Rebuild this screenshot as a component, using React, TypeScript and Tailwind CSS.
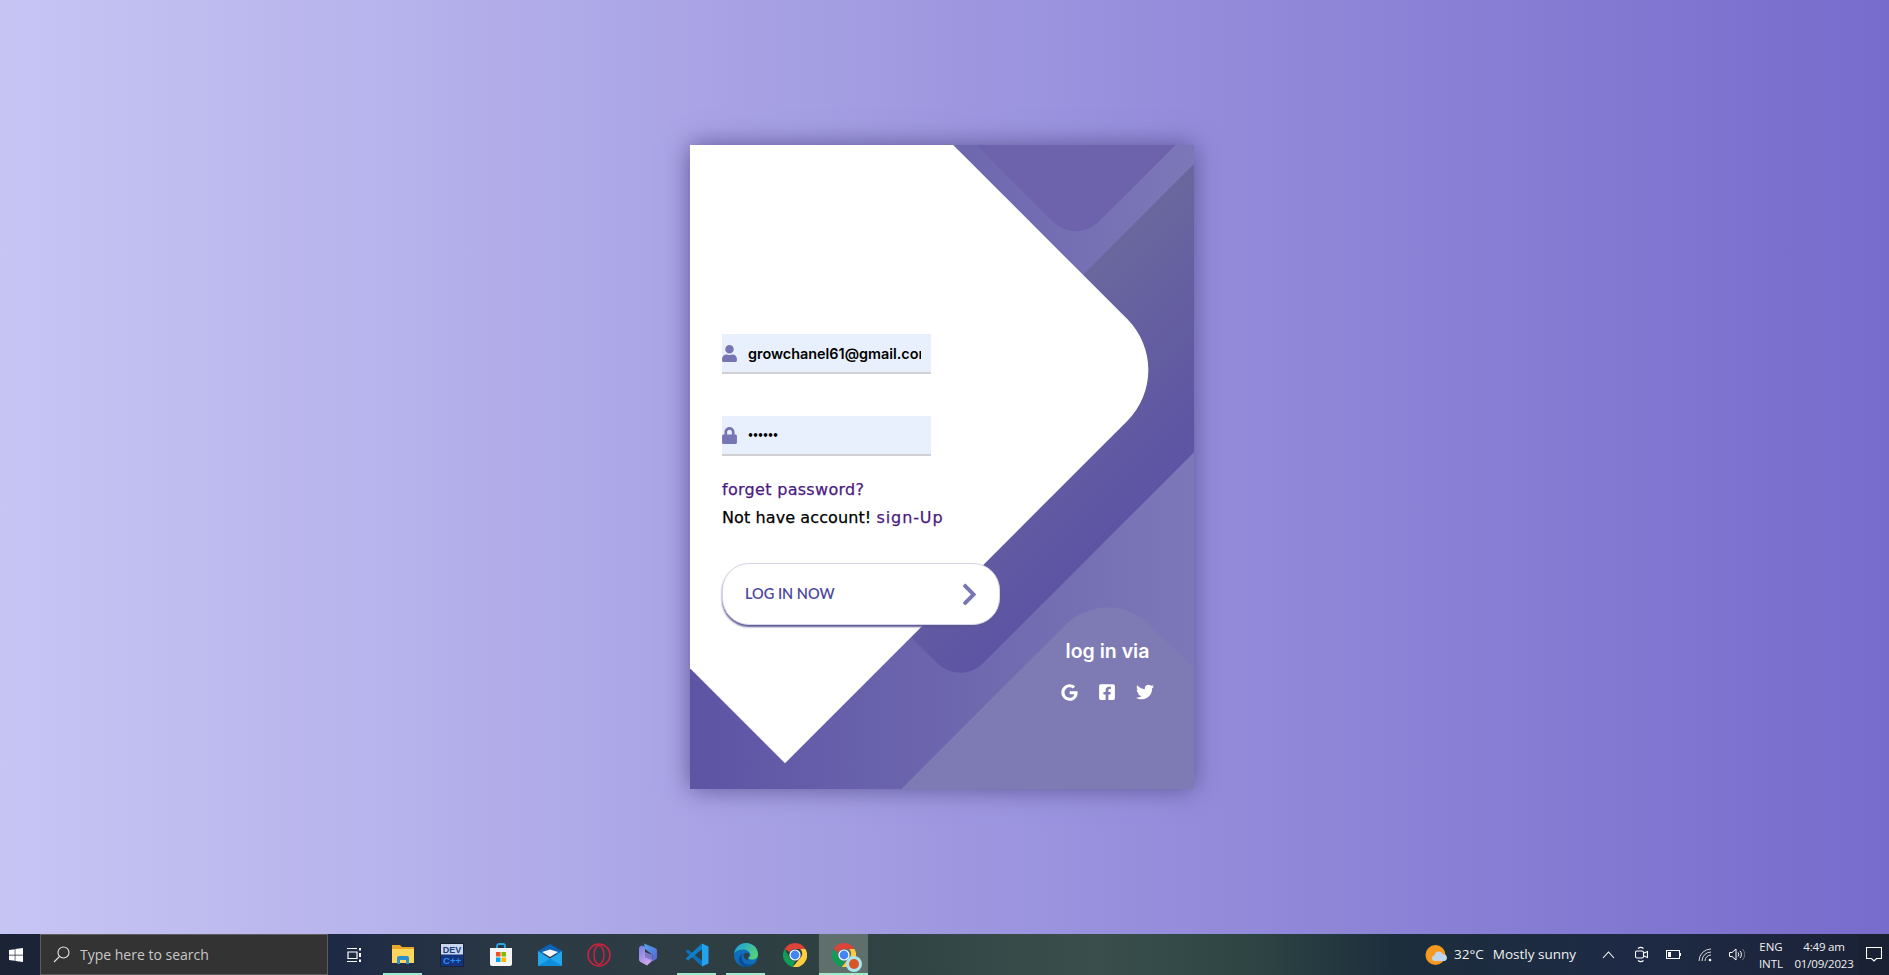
import React from "react";
import { FaUser, FaLock, FaChevronRight, FaGoogle, FaFacebookSquare, FaTwitter, FaWindows } from "react-icons/fa";

function Chrome({ size = 24 }: { size?: number }) {
  return (
    <svg width={size} height={size} viewBox="0 0 24 24">
      <path fill="#DB4437" d="M12 0a12 12 0 0 1 10.39 6H12a6 6 0 0 0-5.2 3L1.6 6A12 12 0 0 1 12 0z" />
      <path fill="#0F9D58" d="M1.6 6l5.2 9a6 6 0 0 0 5.2 3l-2.2 5.9A12 12 0 0 1 1.6 6z" />
      <path fill="#FFCD40" d="M22.39 6A12 12 0 0 1 9.8 23.9L17.2 15a6 6 0 0 0 0-9z" />
      <circle cx="12" cy="12" r="5.6" fill="#fff" />
      <circle cx="12" cy="12" r="4.4" fill="#4285F4" />
    </svg>
  );
}

function Explorer() {
  return (
    <svg width="22" height="19" viewBox="0 0 22 19">
      <path fill="#E8A92A" d="M0 0h8l2 2h12v15H0z" />
      <path fill="#FFD65C" d="M0 4h22v14H0z" />
      <path fill="#2E8FCF" d="M5 19v-6a2 2 0 0 1 2-2h8a2 2 0 0 1 2 2v6h-3v-4H8v4z" />
    </svg>
  );
}

function DevCpp() {
  return (
    <svg width="24" height="24" viewBox="0 0 24 24">
      <rect x="0.5" y="0.5" width="23" height="23" fill="#13357F" stroke="#1A2238" />
      <rect x="1" y="1" width="22" height="10.5" fill="#C9D6EC" />
      <text x="12" y="10" textAnchor="middle" fontSize="9" fontWeight="700" fill="#1B3B7E" fontFamily="Liberation Sans, sans-serif">DEV</text>
      <text x="12" y="21" textAnchor="middle" fontSize="9.5" fontWeight="700" fill="#2A8CF0" fontFamily="Liberation Sans, sans-serif">C++</text>
    </svg>
  );
}

function Store() {
  return (
    <svg width="24" height="24" viewBox="0 0 24 24">
      <path d="M8 5V3a2 2 0 0 1 2-2h4a2 2 0 0 1 2 2v2" fill="none" stroke="#2AA5E6" strokeWidth="1.8" />
      <path fill="#F4F4F4" d="M1 5h22v16a2 2 0 0 1-2 2H3a2 2 0 0 1-2-2z" />
      <rect x="7" y="9" width="4.5" height="4.5" fill="#F25022" />
      <rect x="12.5" y="9" width="4.5" height="4.5" fill="#7FBA00" />
      <rect x="7" y="14.5" width="4.5" height="4.5" fill="#00A4EF" />
      <rect x="12.5" y="14.5" width="4.5" height="4.5" fill="#FFB900" />
    </svg>
  );
}

function Mail() {
  return (
    <svg width="24" height="22" viewBox="0 0 24 22">
      <path fill="#0B63B5" d="M0 7l12-7 12 7v3H0z" />
      <path fill="#F2F4F8" d="M4 8l8-2.500L20 8l-8 5z" />
      <path fill="#22A7EC" d="M0 7l12 7.500L24 7v15H0z" />
      <path fill="#0F8DDB" d="M0 22l12-7.500L24 22z" />
    </svg>
  );
}

function Opera() {
  return (
    <svg width="24" height="24" viewBox="0 0 24 24" fill="none" stroke="#D2203F" strokeWidth="1.5">
      <circle cx="12" cy="12" r="11" />
      <ellipse cx="12" cy="12" rx="5" ry="9.5" />
    </svg>
  );
}

function Bing() {
  return (
    <svg width="20" height="23" viewBox="0 0 20 23">
      <defs>
        <linearGradient id="bingA" x1="0" y1="0" x2="1" y2="1">
          <stop offset="0" stopColor="#4FA8E8" />
          <stop offset="1" stopColor="#5A62D6" />
        </linearGradient>
        <linearGradient id="bingB" x1="0" y1="0" x2="0.6" y2="1">
          <stop offset="0" stopColor="#6F7FE0" />
          <stop offset="1" stopColor="#D7A6F0" />
        </linearGradient>
      </defs>
      <path fill="url(#bingB)" d="M1 5.500a3 3 0 0 1 4.500-2.500L7 4v10l8 3-6 5.500-6.500-3.500A3 3 0 0 1 1 16z" />
      <path fill="url(#bingA)" d="M6 .5l11 4.500a3 3 0 0 1 2 2.800v6.400a3 3 0 0 1-1.500 2.600L14 18.500c1.500-2 1.500-5.500-.5-7.500L7 6z" />
      <path fill="#8E86E6" d="M7 9l6.500 2.500c1.500 1 1.500 5 .5 7L7 14z" opacity="0.8" />
    </svg>
  );
}

function VsCode() {
  return (
    <svg width="24" height="24" viewBox="0 0 24 24">
      <path fill="#0E6FB8" d="M.7 8.500l2.300-2 15 12v4.500L16.500 23z" />
      <path fill="#0E7FCB" d="M.7 15.500l2.300 2 15-12V1L16.500 1z" />
      <path fill="#23A3EE" d="M17 .5L23.500 3.500v17L17 23.500z" />
    </svg>
  );
}

function Edge() {
  return (
    <svg width="24" height="24" viewBox="0 0 24 24">
      <defs>
        <linearGradient id="edgeG" x1="0" y1="0" x2="1" y2="0.6">
          <stop offset="0" stopColor="#1B9DE2" />
          <stop offset="1" stopColor="#52D17C" />
        </linearGradient>
      </defs>
      <circle cx="12" cy="12" r="12" fill="#0F6DBB" />
      <path fill="url(#edgeG)" d="M0.2 10C1.5 4 6.5 0 12 0c7 0 12 5 12 11.5 0 3-2.5 5-5.5 5-2 0-3.5-.5-4.5-1.500 2-1 2.600-2.600 2.200-4C15 8 12.500 6.500 9.500 6.500 5.500 6.500 2 8 .2 10z" />
      <path fill="#0A4E96" d="M9 11c-2 2-1.500 6 1 8.500 2.500 2.500 7 3 10.500 .5-2.500 3-5 4-8.500 4-2.500 0-6-2-7-6-.8-3.500 1.500-6.500 4-7z" />
      <path fill="#2F3F42" d="M9.500 12c.5-1.500 2.500-2.500 4.500-2 1.500.5 1.800 2.500.5 4-1 1-1.500 2.500 0 3.500-2.500-.5-5.500-3-5-5.500z" />
    </svg>
  );
}

function TaskButton({ children, active, highlight }: { children: React.ReactNode; active?: boolean; highlight?: boolean }) {
  return (
    <div className={`relative flex h-full w-[49px] items-center justify-center ${highlight ? "bg-[#5f6f6b]" : ""}`}>
      {children}
      {active && <div className={`absolute bottom-0 h-[2px] bg-[#9FEBCB] ${highlight ? "inset-x-0" : "inset-x-[5px]"}`} />}
    </div>
  );
}

function Field({ icon, type, value, textClass }: { icon: React.ReactNode; type: string; value: string; textClass: string }) {
  return (
    <div className="relative w-[209px]">
      <div className="absolute left-[-1px] top-[11px] text-[#7875B5]">{icon}</div>
      <input
        readOnly
        type={type}
        value={value}
        className={`h-[40px] w-full border-b-2 border-[#D1D1D4] bg-[#E8F0FE] pl-[26px] pr-[10px] font-semibold text-black outline-none ${textClass}`}
      />
    </div>
  );
}

export default function App() {
  return (
    <div className="flex h-[975px] w-[1889px] flex-col overflow-hidden">
      <main className="flex h-[934px] items-center justify-center bg-[linear-gradient(90deg,#C7C5F4,#776BCC)] pr-[5px]">
        <div className="relative h-[644px] w-[504px] bg-[linear-gradient(90deg,#5D54A4,#7C78B8)] shadow-[0_0_24px_#5C5696]">
          <div className="absolute inset-0 overflow-hidden">
            <div className="absolute left-[276px] top-[-166px] h-[220px] w-[220px] rotate-45 rounded-[32px] bg-[#6C63AC]" />
            <div className="absolute left-[294px] top-[-9px] h-[560px] w-[204px] rotate-45 rounded-[32px] bg-[linear-gradient(270deg,#5D54A4,#6A679E)]" />
            <div className="absolute left-[-183px] top-[-53px] h-[556px] w-[556px] rotate-45 rounded-tr-[72px] bg-white" />
            <div className="absolute left-[241px] top-[464px] h-[400px] w-[240px] rotate-45 rounded-[60px] bg-[#7E7BB4]" />
          </div>

          <div className="relative flex h-full flex-col pl-[32px] pt-[189px]">
            <div className="flex flex-col gap-[42px]">
              <Field icon={<FaUser size={17} />} type="text" value="growchanel61@gmail.com" textClass="font-['Inter',sans-serif] text-[14.4px]" />
              <Field icon={<FaLock size={17} />} type="password" value="123456" textClass="font-['Lato',sans-serif] text-[8.6px]" />
            </div>
            <div className="mt-[20px] font-['DejaVu_Sans',sans-serif] text-[16px] leading-[28px] text-black [-webkit-text-stroke:0.25px]">
              <div className="tracking-[0.3px] text-[#4B1A82]">forget password?</div>
              <div className="tracking-[0.1px]">
                Not have account! <span className="tracking-[0.9px] text-[#4B1A82]">sign-Up</span>
              </div>
            </div>
            <button className="mt-[31px] flex h-[62px] w-[278px] items-center justify-between rounded-[27px] border border-[#D4D3E8] bg-white pl-[22px] pr-[17px] font-['Lato',sans-serif] text-[14.5px] font-semibold text-[#4C489D] shadow-[0_2px_2px_#5C5696]">
              <span>LOG IN NOW</span>
              <FaChevronRight size={25} className="text-[#7875B5]" />
            </button>
          </div>

          <div className="absolute right-[40px] top-[493px] flex flex-col items-center text-white">
            <div className="font-['Inter',sans-serif] text-[19.5px] font-semibold leading-[26px]">log in via</div>
            <div className="mt-[19px] flex items-center gap-[20px]">
              <FaGoogle size={17} />
              <FaFacebookSquare size={18} />
              <FaTwitter size={18} />
            </div>
          </div>
        </div>
      </main>

      <footer className="flex h-[41px] items-center bg-[linear-gradient(90deg,#1B2335_0%,#1E2A45_18%,#2C3A44_28%,#2F4142_45%,#3A4F4C_58%,#2E4544_66%,#1C2E3C_74%,#1E2A45_86%,#1B2236_100%)] font-['Open_Sans',sans-serif] text-white">
        <div className="flex h-full w-[40px] items-center pl-[8px]">
          <FaWindows size={16} />
        </div>
        <div className="flex h-full w-[288px] items-center gap-[10px] border border-[#5C5C5C] bg-[#333333] pl-[12px]">
          <svg width="17" height="17" viewBox="0 0 17 17" fill="none" stroke="#E6E6E6" strokeWidth="1.1">
            <circle cx="10.5" cy="6.500" r="5.500" />
            <path d="M6.500 10.500L1 16" />
          </svg>
          <span className="text-[14px] text-[#C8C8C8]">Type here to search</span>
        </div>
        <div className="ml-[1px] flex h-full items-center">
          <TaskButton>
            <svg width="16" height="16" viewBox="0 0 16 16" fill="none" stroke="#fff" strokeWidth="1.200">
              <path d="M1 1.500h10M1 14.500h10M2 5h9v6.500H2z" />
              <path d="M14 1v2.500M14 6v4M14 12.500V15" strokeWidth="2" />
            </svg>
          </TaskButton>
          <TaskButton active><Explorer /></TaskButton>
          <TaskButton><DevCpp /></TaskButton>
          <TaskButton><Store /></TaskButton>
          <TaskButton><Mail /></TaskButton>
          <TaskButton><Opera /></TaskButton>
          <TaskButton><Bing /></TaskButton>
          <TaskButton active><VsCode /></TaskButton>
          <TaskButton active><Edge /></TaskButton>
          <TaskButton><Chrome /></TaskButton>
          <TaskButton active highlight>
            <div className="relative">
              <Chrome />
              <div className="absolute bottom-[-5px] right-[-6px] flex h-[16px] w-[16px] items-center justify-center rounded-full bg-[#A8E6EE]">
                <div className="h-[10px] w-[10px] rounded-full bg-[#D9562B]" />
              </div>
            </div>
          </TaskButton>
        </div>

        <div className="ml-auto flex h-full items-center">
          <svg width="23" height="22" viewBox="0 0 23 22">
            <circle cx="10.500" cy="11" r="10" fill="#F59A1F" />
            <path fill="#BFD4EE" d="M9 17a3 3 0 0 1 .5-5.800 4.500 4.500 0 0 1 8.500-1 3.500 3.500 0 0 1 1.500 6.800z" />
          </svg>
          <span className="ml-[6px] text-[13.5px] text-[#F0F0F0]">32°C</span>
          <span className="ml-[9px] text-[13.5px] text-[#F0F0F0]">Mostly sunny</span>
          <svg className="ml-[26px]" width="13" height="8" viewBox="0 0 13 8" fill="none" stroke="#fff" strokeWidth="1.100">
            <path d="M1 7l5.500-6L12 7" />
          </svg>
          <svg className="ml-[20px]" width="13" height="17" viewBox="0 0 13 17" fill="none" stroke="#fff" strokeWidth="1.100">
            <path d="M3 2.500c1.500-1.300 4-1.300 5.500 0M3 14.500c1.500 1.300 4 1.300 5.500 0" />
            <rect x="0.500" y="5" width="8" height="7" rx="1.500" />
            <path d="M9 7l3.500-1.500v6L9 10" />
          </svg>
          <svg className="ml-[18px]" width="15" height="9" viewBox="0 0 15 9" fill="none" stroke="#fff">
            <rect x="0.500" y="0.500" width="13" height="8" />
            <rect x="2" y="2" width="3" height="5" fill="#fff" stroke="none" />
            <path d="M14.500 3v3" />
          </svg>
          <svg className="ml-[17px]" width="15" height="14" viewBox="0 0 15 14" fill="none" stroke="#D8D8D8" strokeWidth="1">
            <path d="M1 13A12 12 0 0 1 13 1M4 13a9 9 0 0 1 9-9M7 13a6 6 0 0 1 6-6" />
            <circle cx="12" cy="12" r="1.300" fill="#fff" stroke="none" />
          </svg>
          <svg className="ml-[16px]" width="16" height="13" viewBox="0 0 16 13" fill="none" stroke="#fff" strokeWidth="1">
            <path d="M.5 4.500h2.500L7 1v11L3 8.500H.5z" />
            <path d="M9 4.500a3 3 0 0 1 0 4M11 3a5 5 0 0 1 0 7" />
            <path d="M13.500 1a8 8 0 0 1 0 11" stroke="#777" />
          </svg>
          <div className="ml-[14px] flex w-[24px] flex-col items-center whitespace-nowrap text-[11.5px] leading-[17px] text-[#F0F0F0]">
            <span>ENG</span>
            <span>INTL</span>
          </div>
          <div className="ml-[12px] flex w-[58px] flex-col items-center whitespace-nowrap text-[11.5px] leading-[17px] tracking-[-0.2px] text-[#F0F0F0]">
            <span>4:49 am</span>
            <span>01/09/2023</span>
          </div>
          <div className="ml-[6px] flex h-full w-[30px] items-center justify-center bg-[#1A2132]">
            <svg width="16" height="15" viewBox="0 0 16 15" fill="none" stroke="#fff" strokeWidth="1.100">
              <path d="M.5.500h15v11h-5L8 14l-2.500-2.500h-5z" />
            </svg>
          </div>
        </div>
      </footer>
    </div>
  );
}
